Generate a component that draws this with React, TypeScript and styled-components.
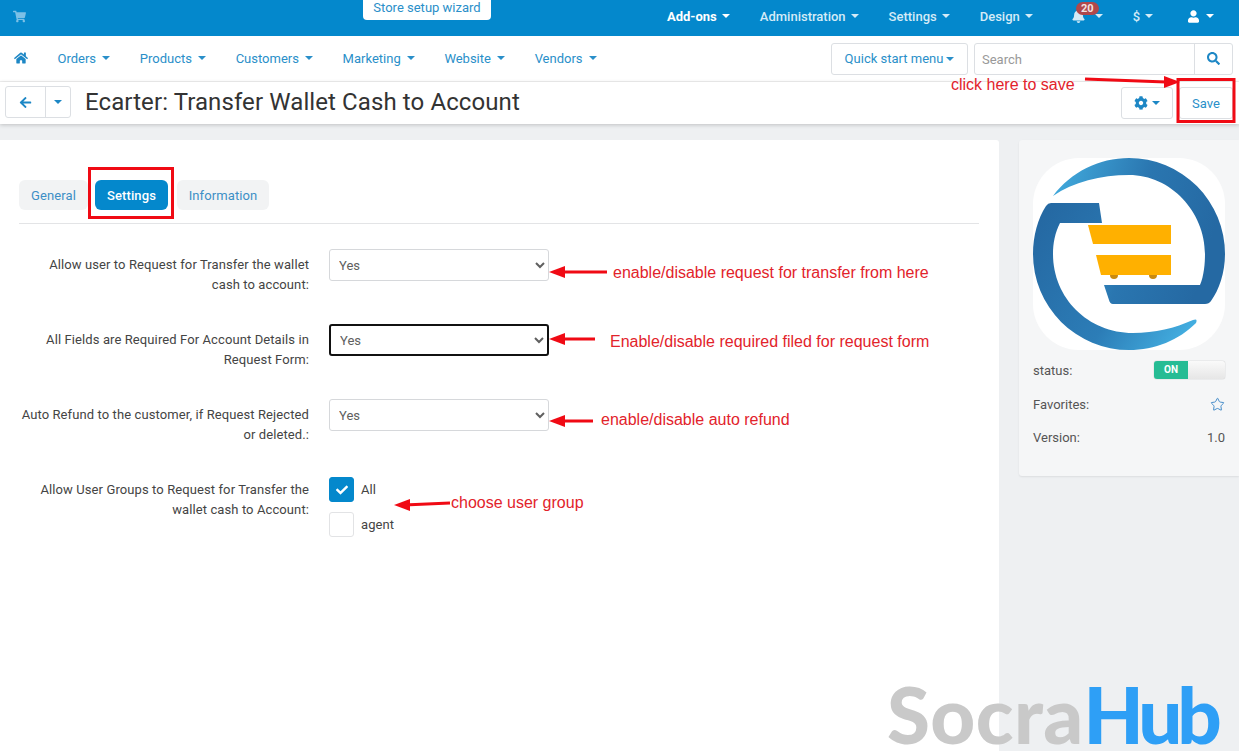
import React from "react";
import styled, { createGlobalStyle } from "styled-components";
import {
  FaArrowLeft,
  FaBell,
  FaCheck,
  FaCog,
  FaHome,
  FaSearch,
  FaShoppingCart,
  FaUser,
} from "react-icons/fa";
import { Star } from "lucide-react";

const GlobalStyle = createGlobalStyle`
  html, body {
    margin: 0;
    padding: 0;
    background: #eef0f2;
    font-family: Roboto, "Liberation Sans", sans-serif;
    font-size: 13px;
    color: #444;
    overflow: hidden;
  }
  * { box-sizing: border-box; }
`;

const Page = styled.div`
  position: relative;
  width: 1239px;
  height: 751px;
  overflow: hidden;
  display: flex;
  flex-direction: column;
`;

const TopBar = styled.header`
  height: 36px;
  flex: none;
  background: #0488cc;
  display: flex;
  padding-left: 13px;
`;

const CartIcon = styled.span`
  width: 14px;
  padding-top: 10px;
  font-size: 13px;
  color: #7cc0e6;
`;

const WizardTab = styled.a`
  margin-left: 336px;
  height: 20px;
  width: 128px;
  background: #fff;
  color: #2a8fc9;
  font-size: 13px;
  line-height: 15px;
  text-align: center;
  border-radius: 0 0 4px 4px;
`;

const TopMenu = styled.nav`
  margin-left: 176px;
  padding-bottom: 4px;
  display: flex;
  align-items: center;
  gap: 30px;
`;

const TopItem = styled.a<{ $strong?: boolean; $w?: number; $gap?: number; $push?: number }>`
  display: flex;
  align-items: center;
  gap: ${(p) => p.$gap || 5}px;
  position: relative;
  width: ${(p) => (p.$w ? `${p.$w}px` : "auto")};
  margin-left: ${(p) => p.$push || 0}px;
  color: ${(p) => (p.$strong ? "#fff" : "#d4ebf7")};
  font-weight: ${(p) => (p.$strong ? 700 : 500)};
  font-size: 13px;
`;

const Caret = styled.i`
  display: inline-block;
  width: 0;
  height: 0;
  border-left: 4px solid transparent;
  border-right: 4px solid transparent;
  border-top: 4px solid currentColor;
`;

const Badge = styled.span`
  position: absolute;
  left: 4px;
  top: -7px;
  width: 23px;
  height: 13px;
  border-radius: 7px;
  background: #b0484c;
  color: #f3e3e3;
  font-size: 11px;
  font-weight: 700;
  line-height: 13px;
  text-align: center;
`;

const NavBar = styled.div`
  height: 46px;
  flex: none;
  background: #fff;
  border-bottom: 1px solid #f1f1f1;
  display: flex;
  align-items: center;
  padding: 0 6px 0 14px;
`;

const HomeLink = styled.a`
  color: #1d87c5;
  font-size: 14px;
  display: flex;
  margin-right: 29.5px;
  margin-top: -1px;
`;

const NavLinks = styled.nav`
  display: flex;
  gap: 29.7px;
  margin-top: -1px;
`;

const NavLink = styled.a`
  display: flex;
  align-items: center;
  gap: 6px;
  color: #2a8fc9;
  font-size: 13px;
  font-weight: 400;
`;

const NavTools = styled.div`
  margin-left: auto;
  display: flex;
  gap: 6px;
`;

const GhostButton = styled.button`
  height: 32px;
  width: 137px;
  padding: 0;
  background: #fff;
  border: 1px solid #dcdfe3;
  border-radius: 3px;
  color: #2a8fc9;
  font: 13px Roboto, sans-serif;
  display: flex;
  align-items: center;
  justify-content: center;
  gap: 3px;
`;

const SearchBox = styled.div`
  width: 259px;
  height: 32px;
  display: flex;
  border: 1px solid #dcdfe3;
  border-radius: 3px;
  background: #fff;
`;

const SearchInput = styled.input`
  flex: 1;
  min-width: 0;
  border: 0;
  outline: 0;
  padding: 1px 7px 0;
  font: 13px Roboto, sans-serif;
  background: transparent;
  &::placeholder { color: #999; }
`;

const SearchButton = styled.span`
  width: 38px;
  border-left: 1px solid #dcdfe3;
  color: #1d87c5;
  font-size: 13px;
  display: flex;
  align-items: center;
  justify-content: center;
`;

const TitleBar = styled.div`
  height: 42px;
  flex: none;
  background: #fff;
  box-shadow: 0 1px 4px rgba(0, 0, 0, 0.2);
  display: flex;
  align-items: center;
  padding: 0 6px 2px 5px;
  position: relative;
`;

const BackGroup = styled.div`
  width: 66px;
  height: 32px;
  display: flex;
  border: 1px solid #dcdfe3;
  border-radius: 3px;
`;

const BackPart = styled.span<{ $narrow?: boolean }>`
  width: ${(p) => (p.$narrow ? "25px" : "40px")};
  border-left: ${(p) => (p.$narrow ? "1px solid #dcdfe3" : "0")};
  display: flex;
  align-items: center;
  justify-content: center;
  color: #1d87c5;
  font-size: 13px;
`;

const Title = styled.h1`
  margin: 0 0 0 14px;
  font-size: 24px;
  font-weight: 400;
  color: #333;
  letter-spacing: 0.1px;
`;

const TitleTools = styled.div`
  margin-left: auto;
  display: flex;
  gap: 6px;
  margin-top: 2px;
`;

const GearButton = styled.span`
  width: 52px;
  height: 32px;
  border: 1px solid #dcdfe3;
  border-radius: 3px;
  color: #1d87c5;
  font-size: 14px;
  display: flex;
  align-items: center;
  justify-content: center;
  gap: 4px;
`;

const SaveButton = styled.span`
  width: 54px;
  height: 32px;
  border: 1px solid #dcdfe3;
  border-radius: 3px;
  color: #2a8fc9;
  font-size: 13px;
  display: flex;
  align-items: center;
  justify-content: center;
`;

const Content = styled.div`
  flex: 1;
  display: flex;
  gap: 20px;
  padding-top: 16px;
`;

const MainCard = styled.main`
  width: 999px;
  background: #fff;
  border-radius: 0 3px 0 0;
  padding: 40px 20px 0 19px;
  letter-spacing: 0.1px;
`;

const Tabs = styled.div`
  height: 44px;
  border-bottom: 1px solid #e3e4e6;
  display: flex;
  align-items: flex-start;
`;

const Tab = styled.a<{ $active?: boolean; $w: number; $gap?: number }>`
  width: ${(p) => p.$w}px;
  margin-left: ${(p) => p.$gap || 0}px;
  height: 30px;
  border-radius: 6px;
  background: ${(p) => (p.$active ? "#0488cc" : "#f2f3f4")};
  color: ${(p) => (p.$active ? "#fff" : "#3d8fc6")};
  font-weight: ${(p) => (p.$active ? 500 : 400)};
  line-height: 31px;
  text-align: center;
`;

const Form = styled.div`
  padding-top: 25px;
`;

const Row = styled.div`
  display: grid;
  grid-template-columns: 290px 220px;
  column-gap: 20px;
  min-height: 75px;
  align-items: start;
`;

const RowLabel = styled.label`
  padding-top: 6px;
  line-height: 20px;
  text-align: right;
  color: #444;
`;

const Select = styled.select<{ $focused?: boolean }>`
  width: 220px;
  height: 32px;
  padding: 0 5px;
  background: #fff;
  color: #606060;
  font: 13px Roboto, sans-serif;
  border-radius: 3px;
  border: ${(p) => (p.$focused ? "2px solid #111" : "1px solid #d6d8db")};
  outline: 0;
`;

const CheckList = styled.div`
  display: flex;
  flex-direction: column;
  gap: 10px;
  padding-top: 3px;
`;

const CheckRow = styled.div`
  display: flex;
  align-items: center;
  gap: 7px;
  color: #444;
`;

const CheckBox = styled.span<{ $on?: boolean }>`
  width: 25px;
  height: 25px;
  border-radius: 3px;
  background: ${(p) => (p.$on ? "#0488cc" : "#fff")};
  border: 1px solid ${(p) => (p.$on ? "#0488cc" : "#e2e3e5")};
  color: #fff;
  font-size: 12px;
  display: flex;
  align-items: center;
  justify-content: center;
`;

const SideCard = styled.aside`
  width: 220px;
  height: 336px;
  background: #f5f6f7;
  border-radius: 3px 0 0 3px;
  box-shadow: 0 1px 2px rgba(0, 0, 0, 0.08);
  padding: 18px 14px 0;
`;

const LogoTile = styled.div`
  width: 192px;
  height: 192px;
  background: #fff;
  border-radius: 46px;
  margin-bottom: 11px;
`;

const InfoRow = styled.div<{ $h: number }>`
  height: ${(p) => p.$h}px;
  display: flex;
  align-items: center;
  justify-content: space-between;
  color: #555;
`;

const Toggle = styled.div`
  width: 71px;
  height: 18px;
  display: flex;
  border-radius: 3px;
  overflow: hidden;
  box-shadow: 0 0 1px rgba(0, 0, 0, 0.45);
`;

const ToggleOn = styled.span`
  width: 34px;
  background: #26bc94;
  color: #fff;
  font-size: 10px;
  font-weight: 700;
  line-height: 18px;
  text-align: center;
`;

const ToggleOff = styled.span`
  flex: 1;
  background: linear-gradient(#fafafa, #e6e6e6);
`;

const StarIcon = styled.span`
  color: #3c86c6;
  display: flex;
`;

const Overlay = styled.svg`
  position: absolute;
  left: 0;
  top: 0;
  pointer-events: none;
`;

const Note = styled.span<{ $x: number; $y: number }>`
  position: absolute;
  left: ${(p) => p.$x}px;
  top: ${(p) => p.$y}px;
  font-family: "Liberation Sans", Arial, sans-serif;
  font-size: 16px;
  line-height: 20px;
  color: #e2232b;
  white-space: nowrap;
`;

const Watermark = styled.div`
  position: absolute;
  left: 887px;
  top: 677px;
  font-family: Lato, sans-serif;
  font-size: 78px;
  font-weight: 900;
  line-height: 74px;
  letter-spacing: 0.4px;
  color: #c9c9c9;
  white-space: nowrap;
  b {
    color: #2e9ff6;
    font-weight: 900;
    letter-spacing: -5px;
  }
`;

const topItems = [
  { label: "Add-ons", strong: true },
  { label: "Administration" },
  { label: "Settings" },
  { label: "Design" },
];

const navItems = ["Orders", "Products", "Customers", "Marketing", "Website", "Vendors"];

const settings = [
  { label: "Allow user to Request for Transfer the wallet cash to account:" },
  { label: "All Fields are Required For Account Details in Request Form:", focused: true },
  { label: "Auto Refund to the customer, if Request Rejected or deleted.:" },
];

const arrows = [
  { tip: [549, 272], end: [607, 272] },
  { tip: [549, 339], end: [595, 339] },
  { tip: [549, 421], end: [593, 421] },
  { tip: [394, 505], end: [450, 503] },
];

const notes = [
  { x: 951, y: 75, text: "click here to save" },
  { x: 613, y: 263, text: "enable/disable request for transfer from here" },
  { x: 610, y: 332, text: "Enable/disable required filed for request form" },
  { x: 601, y: 410, text: "enable/disable auto refund" },
  { x: 451, y: 493, text: "choose user group" },
];

const Logo = () => (
  <svg width="192" height="192" viewBox="0 0 192 192">
    <defs>
      <linearGradient id="ringTop" x1="0" y1="0" x2="1" y2="0.25">
        <stop offset="0" stopColor="#43aee0" />
        <stop offset="0.55" stopColor="#2a76b0" />
        <stop offset="1" stopColor="#2569a3" />
      </linearGradient>
      <linearGradient id="ringLow" x1="0" y1="0.2" x2="1" y2="0.8">
        <stop offset="0" stopColor="#2569a3" />
        <stop offset="0.6" stopColor="#2c7db7" />
        <stop offset="1" stopColor="#43aee0" />
      </linearGradient>
    </defs>
    <path
      d="M20 38 C38 14 66 0 96 0 A96 96 0 0 1 192 96 C192 115 186 132 178 143 Q176 146 172 146 L80 146 Q77 146 76 142 L71 127 L167 127 C171 118 172 105 172 96 C172 54 138 17 96 17 C68 17 40 24 20 38 Z"
      fill="url(#ringTop)"
    />
    <path
      d="M66 45 L69 65 L27 65 C22 75 20 85 20 96 C20 140 55 175 100 175 C122 175 142 170 160 162 Q165 160 163 165 C146 182 122 192 96 192 A96 96 0 0 1 0 96 C0 78 5 60 13 48 Q15 45 18 45 Z"
      fill="url(#ringLow)"
    />
    <circle cx="81" cy="117" r="4" fill="#c98a10" />
    <circle cx="120" cy="117" r="4" fill="#c98a10" />
    <path d="M55 67 H138 V86 H60 Z" fill="#ffb000" />
    <path d="M63 97 H138 V117 H68 Z" fill="#ffb000" />
  </svg>
);

const App = () => {
  return (
    <Page>
      <GlobalStyle />
      <TopBar>
        <CartIcon>
          <FaShoppingCart />
        </CartIcon>
        <WizardTab>Store setup wizard</WizardTab>
        <TopMenu>
          {topItems.map((item) => (
            <TopItem key={item.label} $strong={item.strong}>
              {item.label} <Caret />
            </TopItem>
          ))}
          <TopItem $w={31} $gap={10} $push={9}>
            <FaBell size={14} />
            <Badge>20</Badge>
            <Caret />
          </TopItem>
          <TopItem $w={25}>
            $ <Caret />
          </TopItem>
          <TopItem $strong $w={26} $gap={7}>
            <FaUser size={13} /> <Caret />
          </TopItem>
        </TopMenu>
      </TopBar>

      <NavBar>
        <HomeLink>
          <FaHome />
        </HomeLink>
        <NavLinks>
          {navItems.map((item) => (
            <NavLink key={item}>
              {item} <Caret />
            </NavLink>
          ))}
        </NavLinks>
        <NavTools>
          <GhostButton>
            Quick start menu <Caret />
          </GhostButton>
          <SearchBox>
            <SearchInput placeholder="Search" />
            <SearchButton>
              <FaSearch />
            </SearchButton>
          </SearchBox>
        </NavTools>
      </NavBar>

      <TitleBar>
        <BackGroup>
          <BackPart>
            <FaArrowLeft />
          </BackPart>
          <BackPart $narrow>
            <Caret />
          </BackPart>
        </BackGroup>
        <Title>Ecarter: Transfer Wallet Cash to Account</Title>
        <TitleTools>
          <GearButton>
            <FaCog /> <Caret />
          </GearButton>
          <SaveButton>Save</SaveButton>
        </TitleTools>
      </TitleBar>

      <Content>
        <MainCard>
          <Tabs>
            <Tab $w={69}>General</Tab>
            <Tab $w={73} $gap={7} $active>
              Settings
            </Tab>
            <Tab $w={92} $gap={9}>
              Information
            </Tab>
          </Tabs>
          <Form>
            {settings.map((row) => (
              <Row key={row.label}>
                <RowLabel>{row.label}</RowLabel>
                <Select $focused={row.focused} defaultValue="Yes">
                  <option>Yes</option>
                  <option>No</option>
                </Select>
              </Row>
            ))}
            <Row>
              <RowLabel>Allow User Groups to Request for Transfer the wallet cash to Account:</RowLabel>
              <CheckList>
                <CheckRow>
                  <CheckBox $on>
                    <FaCheck />
                  </CheckBox>
                  All
                </CheckRow>
                <CheckRow>
                  <CheckBox />
                  agent
                </CheckRow>
              </CheckList>
            </Row>
          </Form>
        </MainCard>

        <SideCard>
          <LogoTile>
            <Logo />
          </LogoTile>
          <InfoRow $h={18}>
            status:
            <Toggle>
              <ToggleOn>ON</ToggleOn>
              <ToggleOff />
            </Toggle>
          </InfoRow>
          <InfoRow $h={51}>
            Favorites:
            <StarIcon>
              <Star size={15} strokeWidth={1.5} />
            </StarIcon>
          </InfoRow>
          <InfoRow $h={14}>
            Version:
            <span>1.0</span>
          </InfoRow>
        </SideCard>
      </Content>

      <Overlay width="1239" height="751" viewBox="0 0 1239 751">
        <rect x="89.5" y="168.5" width="83" height="49" fill="none" stroke="#f00a14" strokeWidth="3" />
        <rect x="1178" y="79.5" width="56" height="42" fill="none" stroke="#f00a14" strokeWidth="3" />
        <path d="M1085 79 L1166 82" stroke="#f00a14" strokeWidth="3" />
        <path d="M1164 76 L1180 82 L1164 88 Z" fill="#f00a14" />
        {arrows.map(({ tip, end }) => (
          <g key={tip.join()}>
            <path d={`M${tip[0] + 10} ${tip[1]} L${end[0]} ${end[1]}`} stroke="#f00a14" strokeWidth="3" />
            <path d={`M${tip[0]} ${tip[1]} L${tip[0] + 16} ${tip[1] - 6} L${tip[0] + 16} ${tip[1] + 6} Z`} fill="#f00a14" />
          </g>
        ))}
      </Overlay>
      {notes.map((note) => (
        <Note key={note.text} $x={note.x} $y={note.y}>
          {note.text}
        </Note>
      ))}
      <Watermark>
        Socra<b>Hub</b>
      </Watermark>
    </Page>
  );
};

export default App;
